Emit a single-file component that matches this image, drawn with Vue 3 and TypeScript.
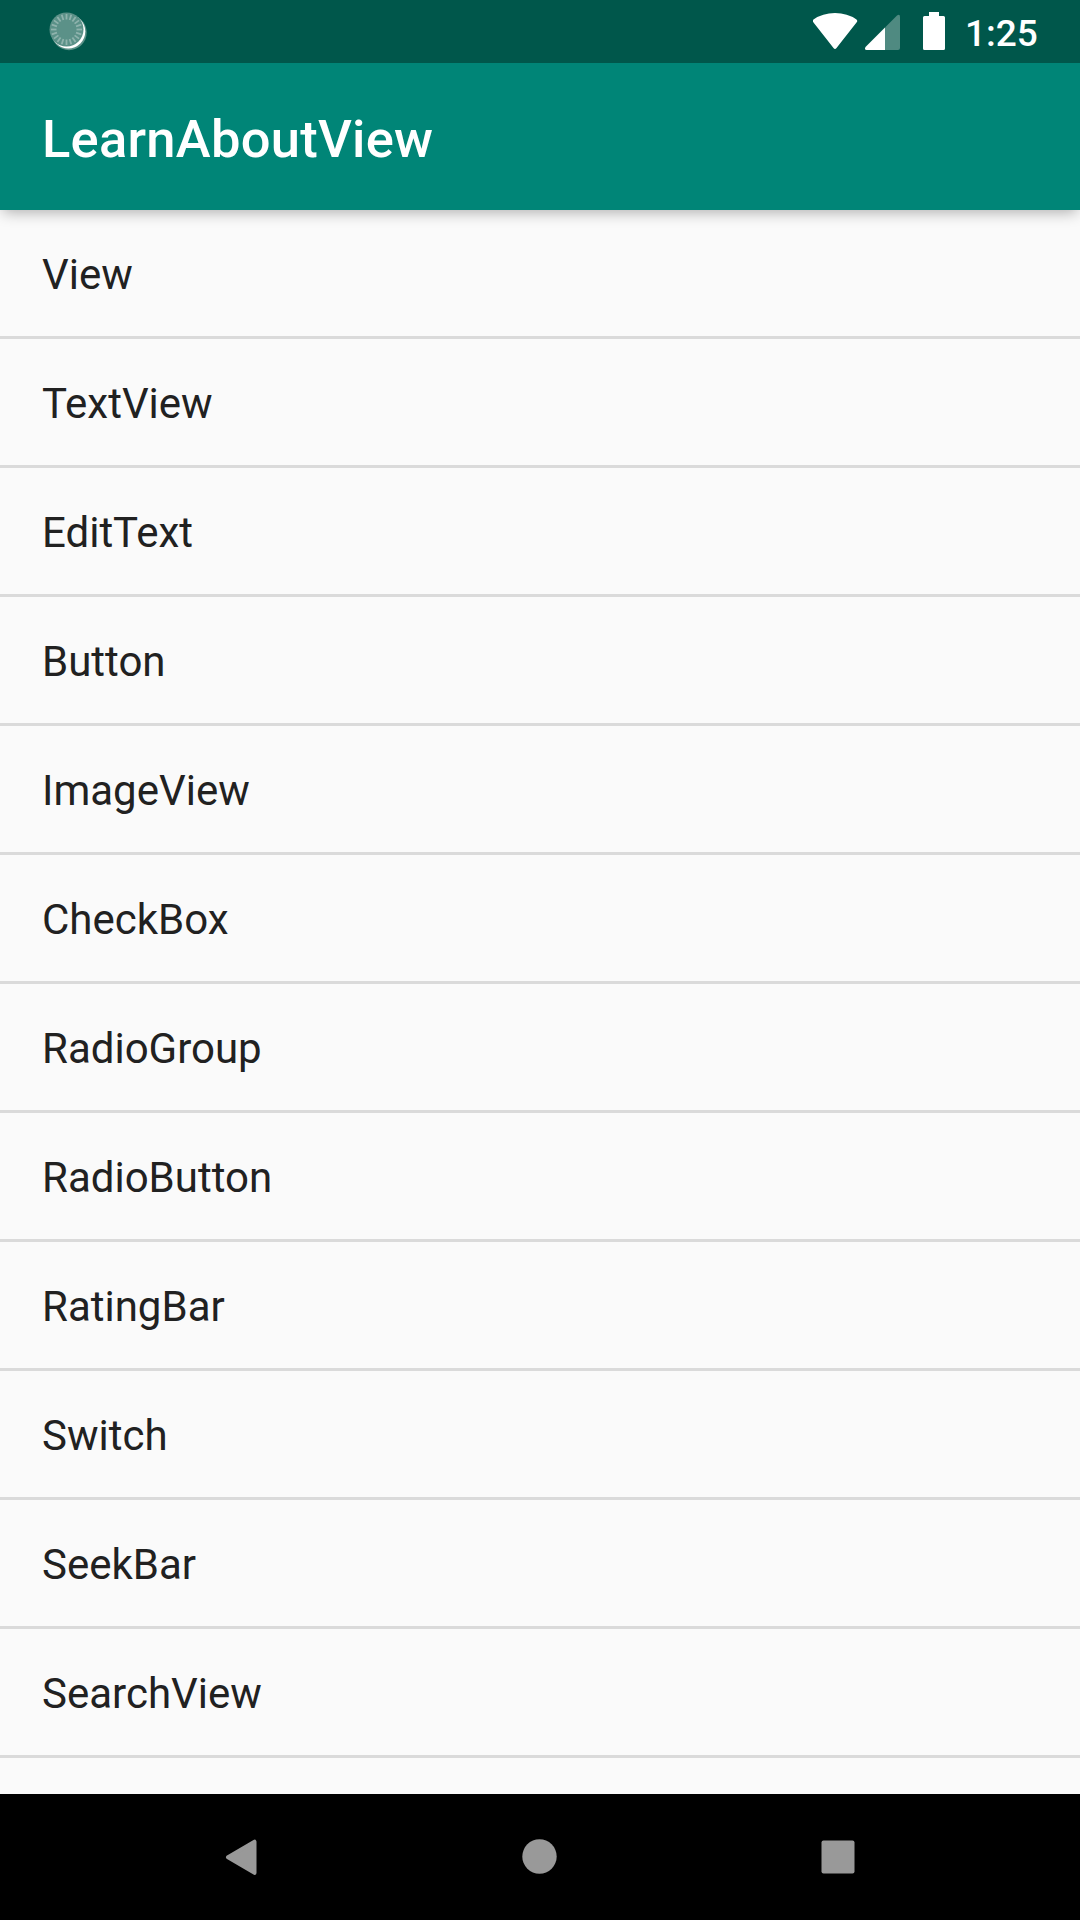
<script setup lang="ts">
const items: string[] = ['View', 'TextView', 'EditText', 'Button', 'ImageView', 'CheckBox', 'RadioGroup', 'RadioButton', 'RatingBar', 'Switch', 'SeekBar', 'SearchView']
const ticks: number[] = Array.from({ length: 20 }, (_, i) => i * 18)
</script>

<template>
  <div class="screen">
    <header class="status">
      <svg class="spinner" width="40" height="63" viewBox="0 0 40 63">
        <circle cx="20" cy="32.500" r="17.700" fill="#5b9188" />
        <circle cx="19.300" cy="31.500" r="17" fill="#fff" />
        <circle cx="17.500" cy="29.500" r="17" fill="#5b9188" />
        <g stroke="#8fb3ad" stroke-width="1.800">
          <line v-for="t in ticks" :key="t" x1="17.500" y1="14" x2="17.500" y2="19.500" :transform="`rotate(${t} 17.500 29.500)`" />
        </g>
      </svg>
      <svg class="icons" width="150" height="63" viewBox="0 0 150 63">
        <path d="M0.500 22.500 Q-1 21 0.500 19.500 Q9.500 13 22 13 Q34.500 13 43.500 19.500 Q45 21 43.500 22.500 L23.500 48 Q22 50 20.500 48 Z" fill="#fff" />
        <path d="M72 27.500 L84 15.500 Q87 13.500 87 17 V48 Q87 50 85 50 H72 Z" fill="#4f8a81" />
        <path d="M72 27.500 V50 H53.500 Q51 49.500 52.500 47 Z" fill="#fff" />
        <path d="M116 12 h10 v4 h4.500 q1.500 0 1.500 1.500 v31 q0 1.500 -1.500 1.500 h-19 q-1.500 0 -1.500 -1.500 v-31 q0 -1.500 1.500 -1.500 h4.500z" fill="#fff" />
      </svg>
      <span class="time">1:25</span>
    </header>
    <div class="appbar">LearnAboutView</div>
    <ul class="list">
      <li v-for="item in items" :key="item">{{ item }}</li>
    </ul>
    <nav class="nav">
      <svg width="1080" height="126" viewBox="0 0 1080 126" fill="#999">
        <path d="M228 63.300 L254.500 47.700 V78.900 Z" stroke="#999" stroke-width="4" stroke-linejoin="round" />
        <circle cx="539.500" cy="62.500" r="17.200" />
        <rect x="821.500" y="46.500" width="33" height="33" rx="2" />
      </svg>
    </nav>
  </div>
</template>

<style>
body { margin: 0; }
</style>
<style scoped>
.screen { width: 1080px; height: 1920px; display: flex; flex-direction: column; overflow: hidden; background: #fafafa; font-family: Roboto, sans-serif; }
.status { height: 63px; flex: none; display: flex; align-items: center; background: #00574b; color: #fff; z-index: 2; }
.spinner { margin-left: 49px; }
.icons { margin-left: 724px; }
.time { margin-left: 2px; padding-top: 4px; font-size: 37px; font-weight: 500; line-height: 63px; }
.appbar { height: 147px; flex: none; box-sizing: border-box; padding: 3px 42px 0; background: #008577; color: #fff; font-size: 52.500px; letter-spacing: .26px; font-weight: 500; line-height: 147px; box-shadow: 0 5px 14px -3px rgba(0,0,0,.32); z-index: 1; }
.list { flex: 1; min-height: 0; overflow: hidden; margin: 0; padding: 0; list-style: none; }
.list li { height: 129px; box-sizing: border-box; padding: 0 42px; border-bottom: 3px solid #dadada; line-height: 130px; font-size: 42px; color: #212121; }
.nav { height: 126px; flex: none; background: #000; }
</style>
